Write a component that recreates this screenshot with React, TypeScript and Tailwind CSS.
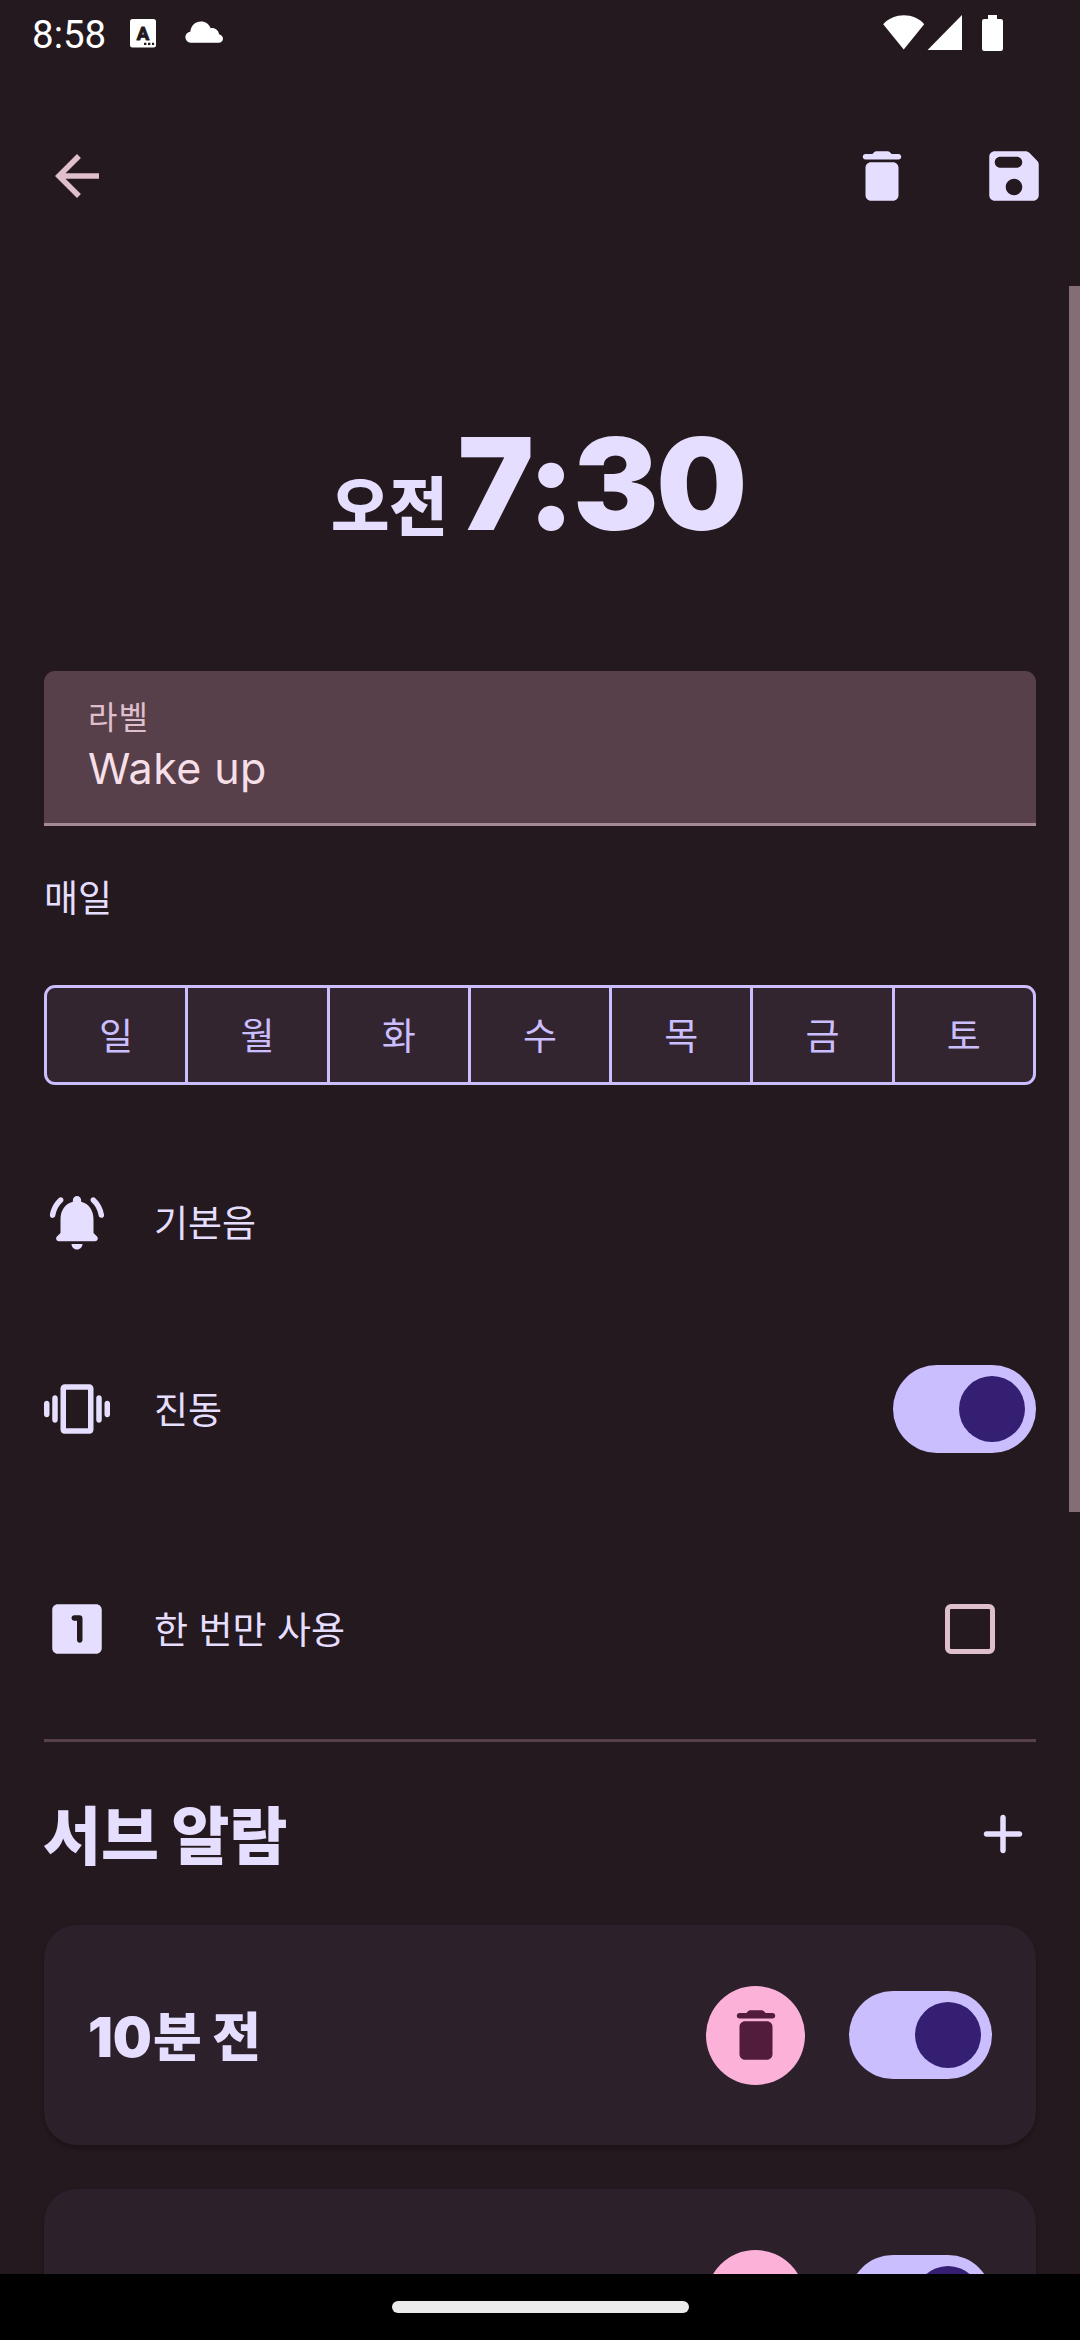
import { useState, type ReactNode } from 'react';

const DAYS = ['일', '월', '화', '수', '목', '금', '토'];

const ICONS = {
  back: 'M20 11H7.83l5.59-5.59L12 4l-8 8 8 8 1.41-1.41L7.83 13H20v-2z',
  trash:
    'M6 19c0 1.1.9 2 2 2h8c1.1 0 2-.9 2-2V9c0-1.1-.9-2-2-2H8c-1.1 0-2 .9-2 2v10zM18 4h-2.5l-.71-.71c-.18-.18-.44-.29-.7-.29H9.91c-.26 0-.52.11-.7.29L8.5 4H6c-.55 0-1 .45-1 1s.45 1 1 1h12c.55 0 1-.45 1-1s-.45-1-1-1z',
  save: 'M17.59 3.59c-.38-.38-.89-.59-1.42-.59H5c-1.11 0-2 .9-2 2v14c0 1.1.9 2 2 2h14c1.1 0 2-.9 2-2V7.83c0-.53-.21-1.04-.59-1.41l-2.82-2.83zM12 19c-1.66 0-3-1.34-3-3s1.34-3 3-3 3 1.34 3 3-1.34 3-3 3zm1-10H7c-1.1 0-2-.9-2-2s.9-2 2-2h6c1.1 0 2 .9 2 2s-.9 2-2 2z',
  bell: 'M18 16v-5c0-3.07-1.63-5.64-4.5-6.32V4c0-.83-.67-1.5-1.5-1.5s-1.5.67-1.5 1.5v.68C7.64 5.36 6 7.92 6 11v5l-1.3 1.29c-.63.63-.19 1.71.7 1.71h13.17c.89 0 1.34-1.08.71-1.71L18 16zM12 22c1.1 0 2-.9 2-2h-4c0 1.1.9 2 2 2zM6.77 4.73c.42-.38.43-1.03.03-1.43-.38-.38-1-.39-1.39-.02C3.7 4.84 2.52 6.96 2.14 9.34c-.09.61.38 1.16 1 1.16.48 0 .9-.35.98-.83.3-1.94 1.26-3.67 2.65-4.94zM18.6 3.28c-.4-.37-1.02-.36-1.4.02-.4.4-.38 1.04.03 1.42 1.38 1.27 2.35 3 2.65 4.94.07.48.49.83.98.83.61 0 1.09-.55.99-1.16-.38-2.37-1.55-4.48-3.25-6.05z',
  vibrate:
    'M1 15c.55 0 1-.45 1-1v-4c0-.55-.45-1-1-1s-1 .45-1 1v4c0 .55.45 1 1 1zm3 2c.55 0 1-.45 1-1V8c0-.55-.45-1-1-1s-1 .45-1 1v8c0 .55.45 1 1 1zm18-7v4c0 .55.45 1 1 1s1-.45 1-1v-4c0-.55-.45-1-1-1s-1 .45-1 1zm-2 7c.55 0 1-.45 1-1V8c0-.55-.45-1-1-1s-1 .45-1 1v8c0 .55.45 1 1 1zM16.5 3h-9C6.67 3 6 3.67 6 4.5v15c0 .83.67 1.5 1.5 1.5h9c.83 0 1.5-.67 1.5-1.5v-15c0-.83-.67-1.5-1.5-1.5zM16 19H8V5h8v14z',
  once: 'M19 3H5c-1.1 0-2 .9-2 2v14c0 1.1.9 2 2 2h14c1.1 0 2-.9 2-2V5c0-1.1-.9-2-2-2zm-6 14c-.55 0-1-.45-1-1V9h-1c-.55 0-1-.45-1-1s.45-1 1-1h2c.55 0 1 .45 1 1v8c0 .55-.45 1-1 1z',
  add: 'M18 13h-5v5c0 .55-.45 1-1 1s-1-.45-1-1v-5H6c-.55 0-1-.45-1-1s.45-1 1-1h5V6c0-.55.45-1 1-1s1 .45 1 1v5h5c.55 0 1 .45 1 1s-.45 1-1 1z',
};

function Icon({ name, className = '' }: { name: keyof typeof ICONS; className?: string }) {
  return (
    <svg viewBox="0 0 24 24" fill="currentColor" className={`size-[66px] shrink-0 ${className}`}>
      <path d={ICONS[name]} />
    </svg>
  );
}

function Switch() {
  const [on, setOn] = useState(true);
  return (
    <button
      role="switch"
      aria-checked={on}
      onClick={() => setOn(!on)}
      className={`flex h-[88px] w-[143px] shrink-0 items-center rounded-full px-[11px] ${
        on ? 'justify-end bg-[#cbbeff]' : 'justify-start bg-[#58404b]'
      }`}
    >
      <span className="size-[66px] rounded-full bg-[#351f73]" />
    </button>
  );
}

function StatusBar() {
  return (
    <div className="flex h-[66px] shrink-0 items-start pl-8 text-white">
      <span className="mt-3 w-[98px] font-[Roboto] text-[38.5px] leading-[46px]">8:58</span>
      <svg viewBox="0 0 26 29" className="mt-[19px] h-[29px] w-[26px]">
        <rect width="26" height="28.5" rx="2.5" fill="#fff" />
        <text
          x="13"
          y="21"
          textAnchor="middle"
          fill="#23191e"
          stroke="#23191e"
          strokeWidth="1"
          strokeLinejoin="round"
          className="font-[Roboto] text-[18.5px] font-bold"
        >
          A
        </text>
        <path fill="#23191e" d="M14 23.8h2.4v2.2H14zM18 23.8h2.4v2.2H18zM22 23.8h2.1v2.2H22z" />
      </svg>
      <svg viewBox="0 0 38 22" className="ml-[29px] mt-[21px] h-[22px] w-[38px]">
        <path
          fill="#fff"
          d="M5.6 21.8A5.5 5.5 0 0 1 0.4 16.2C0.4 13.4 2.6 11.2 5.3 10.8C6 4.6 10.3 0.6 16 0.6C20.6 0.6 24 3.2 25.7 7.2C30 6.6 33.2 9.2 34.1 13.2C36.4 13.8 38 15.5 38 17.6C38 20 36.2 21.8 33.6 21.8Z"
        />
      </svg>
      <svg viewBox="0 0 122 38" className="ml-[660px] mt-[14px] h-[38px] w-[122px]" fill="#fff">
        <path d="M0.2 10.3C11 -1.6 31 -1.6 41.2 10.3L20.7 35.6Z" />
        <path d="M44.6 36L79 1v35z" />
        <path d="M105 1h9v4h3.8a2.2 2.2 0 0 1 2.2 2.2v27.6a2.2 2.2 0 0 1-2.2 2.2h-16.6a2.2 2.2 0 0 1-2.2-2.2V7.2A2.2 2.2 0 0 1 101.2 5H105z" />
      </svg>
    </div>
  );
}

function SettingRow({ icon, label, className, children }: {
  icon: keyof typeof ICONS;
  label: string;
  className: string;
  children?: ReactNode;
}) {
  return (
    <div className={`flex shrink-0 items-center ${className}`}>
      <Icon name={icon} />
      <span className="ml-11 flex-1 pt-[3px] text-[37px] leading-[54px]">{label}</span>
      {children}
    </div>
  );
}

function SubAlarm({ minutes }: { minutes?: number }) {
  return (
    <div className="flex h-[220px] shrink-0 items-center rounded-[33px] bg-[#2c202a] px-11 shadow-[0_3px_4px_rgba(0,0,0,0.25)]">
      <p className="flex-1 pt-[5px] text-[53px] font-black leading-[72px]">
        {minutes && (
          <>
            <span className="mr-px text-[55px]">{minutes}</span>분 전
          </>
        )}
      </p>
      <button className="flex size-[99px] items-center justify-center rounded-full bg-[#fbb1d8] text-[#521d3d]">
        <Icon name="trash" />
      </button>
      <div className="ml-11 flex">
        <Switch />
      </div>
    </div>
  );
}

export default function App() {
  const [once, setOnce] = useState(false);

  return (
    <div className="relative flex h-[2340px] w-[1080px] flex-col overflow-hidden bg-[#23191e] font-[Inter,'Noto_Sans_CJK_KR',sans-serif] text-[#e6deff]">
      <StatusBar />

      <header className="flex h-[220px] shrink-0 items-start pl-11 pr-[33px] pt-[77px]">
        <button className="text-[#dfbfcc]">
          <Icon name="back" />
        </button>
        <div className="ml-auto flex gap-[66px]">
          <Icon name="trash" />
          <Icon name="save" />
        </div>
      </header>

      <main className="flex min-h-0 flex-1 flex-col overflow-hidden px-11">
        <div className="flex h-[385px] shrink-0 items-baseline justify-center pr-1 pt-[118px] leading-[160px]">
          <span className="text-[63.5px] font-black">오전</span>
          <span className="ml-2.5 text-[128px] font-black tracking-[-2.2px]">7:30</span>
        </div>

        <div className="flex h-[155px] shrink-0 flex-col rounded-t-[11px] border-b-[3px] border-[#a58994] bg-[#58404b] px-11 pt-6">
          <label className="text-[32px] leading-[46px] tracking-[1px] text-[#dfbfcc]">라벨</label>
          <span className="text-[43px] leading-[54px] tracking-[0.4px] text-[#f6dfe7]">Wake up</span>
        </div>

        <p className="mt-[46px] shrink-0 text-[37px] leading-[54px]">매일</p>

        <div className="mt-[59px] flex h-[100px] shrink-0 divide-x-[3px] divide-[#cbbeff] overflow-hidden rounded-[11px] border-[3px] border-[#cbbeff] bg-[#32252f] text-[#cbbeff]">
          {DAYS.map((day) => (
            <button key={day} className="flex flex-1 items-center justify-center pt-[3px] text-[37px]">
              {day}
            </button>
          ))}
        </div>

        <SettingRow icon="bell" label="기본음" className="mt-[104px] h-[66px]" />
        <SettingRow icon="vibrate" label="진동" className="mt-[110px] h-[88px]">
          <Switch />
        </SettingRow>
        <SettingRow icon="once" label="한 번만 사용" className="mt-[110px] h-[132px]">
          <button
            role="checkbox"
            aria-checked={once}
            onClick={() => setOnce(!once)}
            className="mr-[41px] size-[50px] rounded-[6px] border-[5.5px] border-[#dfbfcc]"
          />
        </SettingRow>

        <hr className="mt-[44px] h-[3px] shrink-0 border-0 bg-[#58404b]" />

        <div className="mt-[44px] flex h-24 shrink-0 items-center justify-between">
          <h2 className="-ml-px pt-1 text-[63px] font-black leading-[92px]">서브 알람</h2>
          <Icon name="add" />
        </div>

        <div className="mt-[43px] flex shrink-0 flex-col gap-11">
          <SubAlarm minutes={10} />
          <SubAlarm />
        </div>
      </main>

      <div className="flex h-[66px] shrink-0 items-center justify-center bg-black">
        <span className="h-3 w-[297px] rounded-full bg-[#ebebeb]" />
      </div>

      {/* scroll indicator */}
      <div className="absolute right-0 top-[286px] h-[1226px] w-[11px] bg-[#856d78]" />
    </div>
  );
}
